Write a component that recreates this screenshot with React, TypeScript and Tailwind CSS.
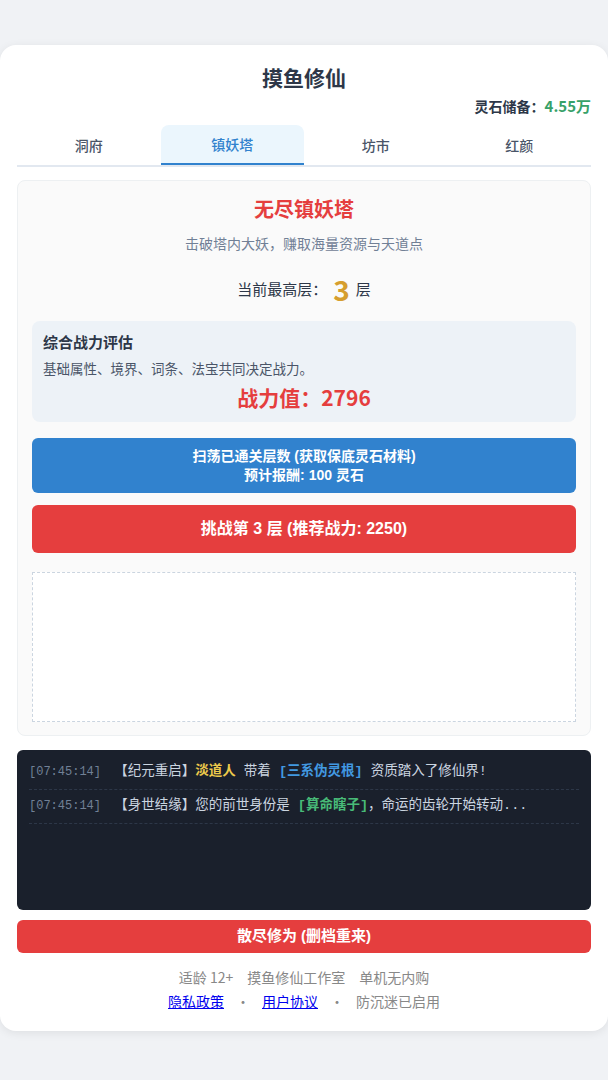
import React from 'react';

const tabs = ['洞府', '镇妖塔', '坊市', '红颜'];

export default function App() {
  const font = { fontFamily: '"Noto Sans CJK SC", "Noto Sans", sans-serif' };
  const btnFont = { fontFamily: '"Liberation Sans", "Noto Sans CJK SC", sans-serif' };
  const monoFont = { fontFamily: '"Liberation Mono", "Noto Sans CJK SC", monospace' };

  return (
    <div className="min-h-[1080px] bg-[#f0f2f5] pt-[45px]" style={font}>
      <div className="bg-white rounded-2xl shadow-[0_2px_10px_rgba(0,0,0,0.08)] px-[17px] pt-[16px] pb-[19px]">
        {/* Header */}
        <h1 className="text-center text-[21px] font-bold text-[#2d3748] leading-[32px]">摸鱼修仙</h1>
        <div className="text-right text-[14px] font-bold text-[#2d3748] leading-[22px] mt-[2px]">
          灵石储备：<span className="text-[#38a169] text-[15px]">4.55万</span>
        </div>

        {/* Tabs */}
        <div className="grid grid-cols-4 border-b-2 border-[#e2e8f0] mt-[8px]">
          {tabs.map((t) =>
            t === '镇妖塔' ? (
              <div key={t} className="h-[40px] flex items-center justify-center rounded-t-lg bg-[#ebf6fd] text-[#3182ce] text-[14px] font-medium border-b-2 border-[#3182ce] mb-[-2px]">
                {t}
              </div>
            ) : (
              <div key={t} className="h-[40px] flex items-center justify-center text-[#4a5568] text-[14px] font-medium">
                {t}
              </div>
            )
          )}
        </div>

        {/* Tower panel */}
        <div className="mt-[13px] bg-[#fafafa] border border-[#edf0f2] rounded-lg px-[14px] pt-[12px] pb-[13px]">
          <h2 className="text-center text-[20px] font-bold text-[#e53e3e] leading-[32px]">无尽镇妖塔</h2>
          <p className="text-center text-[14px] text-[#718096] leading-[20px] mt-[8px]">击破塔内大妖，赚取海量资源与天道点</p>
          <div className="flex items-center justify-center gap-[6px] text-[15px] text-[#2d3748] mt-[19px] h-[34px]">
            <span>当前最高层：</span>
            <span className="text-[28px] font-bold text-[#d69e2e]">3</span>
            <span>层</span>
          </div>

          <div className="mt-[15px] bg-[#edf2f7] rounded-lg px-[11px] pt-[10px] pb-[10px]">
            <div className="text-[15px] font-bold text-[#2d3748] leading-[22px]">综合战力评估</div>
            <div className="text-[13.5px] text-[#4a5568] leading-[20px] mt-[5px]">基础属性、境界、词条、法宝共同决定战力。</div>
            <div className="text-center text-[21px] font-bold text-[#e53e3e] leading-[30px] mt-[4px]">战力值：2796</div>
          </div>

          <button
            className="mt-[16px] w-full h-[55px] rounded-md bg-[#3182ce] text-white font-bold text-[14px] leading-[19px] flex flex-col items-center justify-center"
            style={btnFont}
          >
            <span>扫荡已通关层数 (获取保底灵石材料)</span>
            <span>预计报酬: 100 灵石</span>
          </button>

          <button
            className="mt-[12px] w-full h-[48px] rounded-md bg-[#e53e3e] text-white font-bold text-[16px] flex items-center justify-center"
            style={btnFont}
          >
            挑战第 3 层 (推荐战力: 2250)
          </button>

          <div className="mt-[19px] h-[150px] bg-white border border-dashed border-[#cbd5e0]" />
        </div>

        {/* Log */}
        <div className="mt-[14px] h-[160px] bg-[#1a202c] rounded-md px-[12px] pt-[10px] text-[13.5px] leading-[20px] whitespace-pre" style={monoFont}>
          <div className="flex items-center pt-[2px] pb-[7px] border-b border-dashed border-[#2d3748] text-[#cbd5e0]">
            <span className="text-[#718096] text-[12px] mr-[6px]">[07:45:14] </span>
            <span>【纪元重启】</span>
            <span className="text-[#ecc94b] font-bold">淡道人</span>
            <span> 带着 </span>
            <span className="text-[#4299e1] font-bold">[三系伪灵根]</span>
            <span> 资质踏入了修仙界!</span>
          </div>
          <div className="flex items-center pt-[6px] pb-[7px] border-b border-dashed border-[#2d3748] text-[#cbd5e0]">
            <span className="text-[#718096] text-[12px] mr-[6px]">[07:45:14] </span>
            <span>【身世结缘】您的前世身份是 </span>
            <span className="text-[#48bb78] font-bold">[算命瞎子]</span>
            <span>，命运的齿轮开始转动...</span>
          </div>
        </div>

        <button
          className="mt-[10px] w-full h-[33px] rounded-md bg-[#e53e3e] text-white font-bold text-[15px] flex items-center justify-center"
          style={btnFont}
        >
          散尽修为 (删档重来)
        </button>

        {/* Footer */}
        <div className="mt-[13px] text-center text-[14px] text-[#888888] leading-[22px]">
          <div className="flex justify-center gap-[14px]">
            <span>适龄 12+</span>
            <span>摸鱼修仙工作室</span>
            <span>单机无内购</span>
          </div>
          <div className="flex justify-center gap-[12px] mt-[2px]">
            <a className="text-[#0000ee] underline">隐私政策</a>
            <span>·</span>
            <a className="text-[#0000ee] underline">用户协议</a>
            <span>·</span>
            <span>防沉迷已启用</span>
          </div>
        </div>
      </div>
    </div>
  );
}
